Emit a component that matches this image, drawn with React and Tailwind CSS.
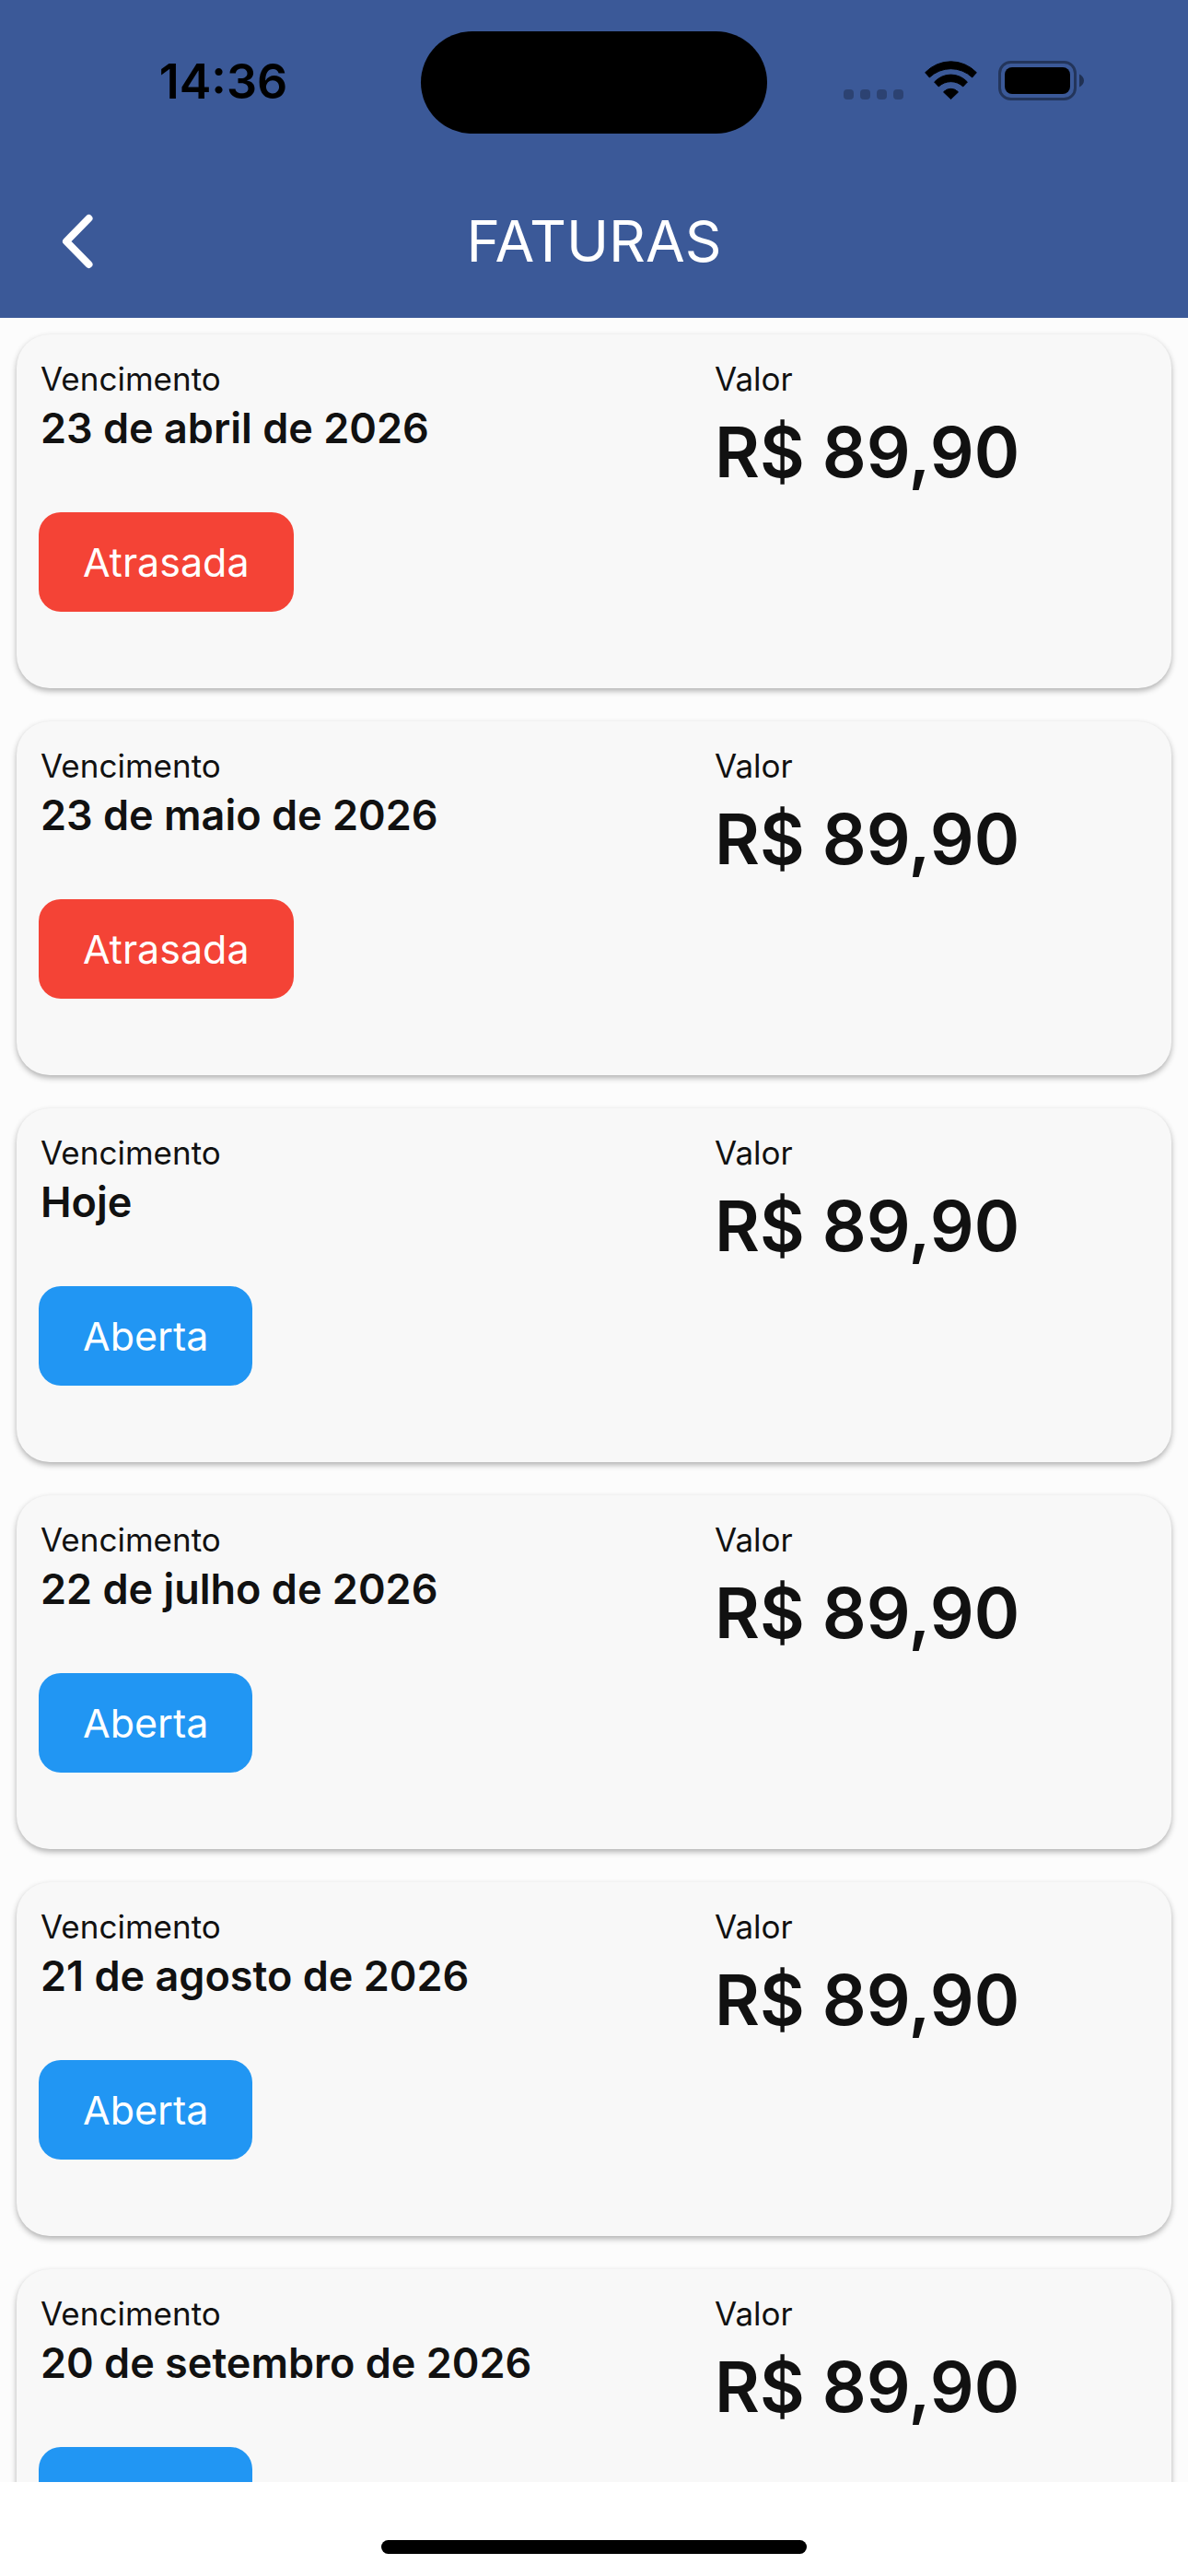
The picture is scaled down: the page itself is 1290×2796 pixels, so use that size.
import { useState } from "react";

const INVOICES = [
  { id: 1, dueDate: "23 de abril de 2026", amount: "R$ 89,90", status: "Atrasada" },
  { id: 2, dueDate: "23 de maio de 2026", amount: "R$ 89,90", status: "Atrasada" },
  { id: 3, dueDate: "Hoje", amount: "R$ 89,90", status: "Aberta" },
  { id: 4, dueDate: "22 de julho de 2026", amount: "R$ 89,90", status: "Aberta" },
  { id: 5, dueDate: "21 de agosto de 2026", amount: "R$ 89,90", status: "Aberta" },
  { id: 6, dueDate: "20 de setembro de 2026", amount: "R$ 89,90", status: "Aberta" },
];

const STATUS_COLORS = {
  Atrasada: "bg-[#f44336]",
  Aberta: "bg-[#2196f3]",
};

function SignalDots() {
  return (
    <div className="flex gap-[7px] pb-px self-end">
      <span className="size-[11px] rounded-[4px] bg-black/25" />
      <span className="size-[11px] rounded-[4px] bg-black/25" />
      <span className="size-[11px] rounded-[4px] bg-black/25" />
      <span className="size-[11px] rounded-[4px] bg-black/25" />
    </div>
  );
}

function WifiIcon() {
  return (
    <svg viewBox="0 0 172 129" className="w-[57px] h-[43px]" aria-hidden="true">
      <g stroke="#000" strokeWidth="3" strokeLinejoin="round">
        <path d="M2 38A116 116 0 0 1 170 38L156 54A101 101 0 0 0 16 54Z" />
        <path d="M32 69A73 73 0 0 1 140 69L126 84A58 58 0 0 0 46 84Z" />
        <path d="M62 102A32 32 0 0 1 110 102L86 125Z" />
      </g>
    </svg>
  );
}

function BatteryIcon() {
  return (
    <svg viewBox="0 0 93 43" className="w-[93px] h-[43px]" aria-hidden="true">
      <rect
        x="1.5"
        y="1.5"
        width="82"
        height="40"
        rx="12"
        fill="none"
        stroke="#000"
        strokeOpacity="0.4"
        strokeWidth="3"
      />
      <rect x="7" y="7" width="71" height="29" rx="8" />
      <path d="M88 14.5C91 16 93 18.500 93 21.500S91 27 88 28.500Z" fillOpacity="0.45" />
    </svg>
  );
}

function StatusBar() {
  return (
    <div className="grid grid-cols-[1fr_auto_1fr] items-center h-[178px]">
      <div className="pl-7 text-center text-[52px] leading-none font-semibold text-black">
        14:36
      </div>
      <div className="w-[376px] h-[111px] rounded-full bg-black" />
      <div className="flex items-center justify-center pr-[30px] pb-1">
        <div className="flex items-center gap-[23px]">
          <SignalDots />
          <WifiIcon />
          <BatteryIcon />
        </div>
      </div>
    </div>
  );
}

function NavBar() {
  return (
    <div className="grid grid-cols-[1fr_auto_1fr] items-center h-[167px] px-[60px]">
      <button type="button" aria-label="Voltar" className="justify-self-start">
        <svg
          viewBox="0 0 48 64"
          className="w-12 h-16"
          fill="none"
          stroke="#fff"
          strokeWidth="8"
          strokeLinecap="round"
          strokeLinejoin="round"
        >
          <path d="M36.500 7L12 32L36.500 57" />
        </svg>
      </button>
      <h1 className="text-[62px] leading-none font-normal text-white">FATURAS</h1>
    </div>
  );
}

function InvoiceCard({ invoice, onPress }) {
  return (
    <li className="grid grid-cols-[14fr_9fr] shrink-0 h-96 px-6 pt-6 rounded-[36px] bg-[#f8f8f8] shadow-[0_3px_6px_rgba(0,0,0,0.3)]">
      {/* DUE DATE */}
      <div className="flex flex-col items-start">
        <div className="flex flex-col pl-0.5">
          <span className="text-[35px] leading-12">Vencimento</span>
          <strong className="text-[45px] leading-15 font-semibold">
            {invoice.dueDate}
          </strong>
        </div>
        <button
          type="button"
          onClick={() => onPress(invoice.id)}
          className={`mt-[61px] h-[108px] px-12 rounded-3xl text-[43px] font-normal text-white ${STATUS_COLORS[invoice.status]}`}
        >
          {invoice.status}
        </button>
      </div>

      {/* AMOUNT */}
      <div className="flex flex-col items-start">
        <span className="text-[35px] leading-12">Valor</span>
        <strong className="mt-2 text-[75px] leading-24 font-semibold">
          {invoice.amount}
        </strong>
      </div>
    </li>
  );
}

function App() {
  const [, setSelected] = useState(null);

  return (
    <div className="flex flex-col h-screen overflow-hidden bg-white font-['Inter',sans-serif] text-[#111111]">
      <header className="shrink-0 bg-[#3b5998]">
        <StatusBar />
        <NavBar />
      </header>

      <main className="flex-1 min-h-0 overflow-y-auto [scrollbar-width:none] bg-[#fcfcfc]">
        <ul className="flex flex-col gap-9 px-[18px] py-[18px]">
          {INVOICES.map((invoice) => (
            <InvoiceCard key={invoice.id} invoice={invoice} onPress={setSelected} />
          ))}
        </ul>
      </main>

      <footer className="flex justify-center items-end shrink-0 h-[102px] pb-6">
        <div className="w-[462px] h-[15px] rounded-full bg-black" />
      </footer>
    </div>
  );
}

export default App;
